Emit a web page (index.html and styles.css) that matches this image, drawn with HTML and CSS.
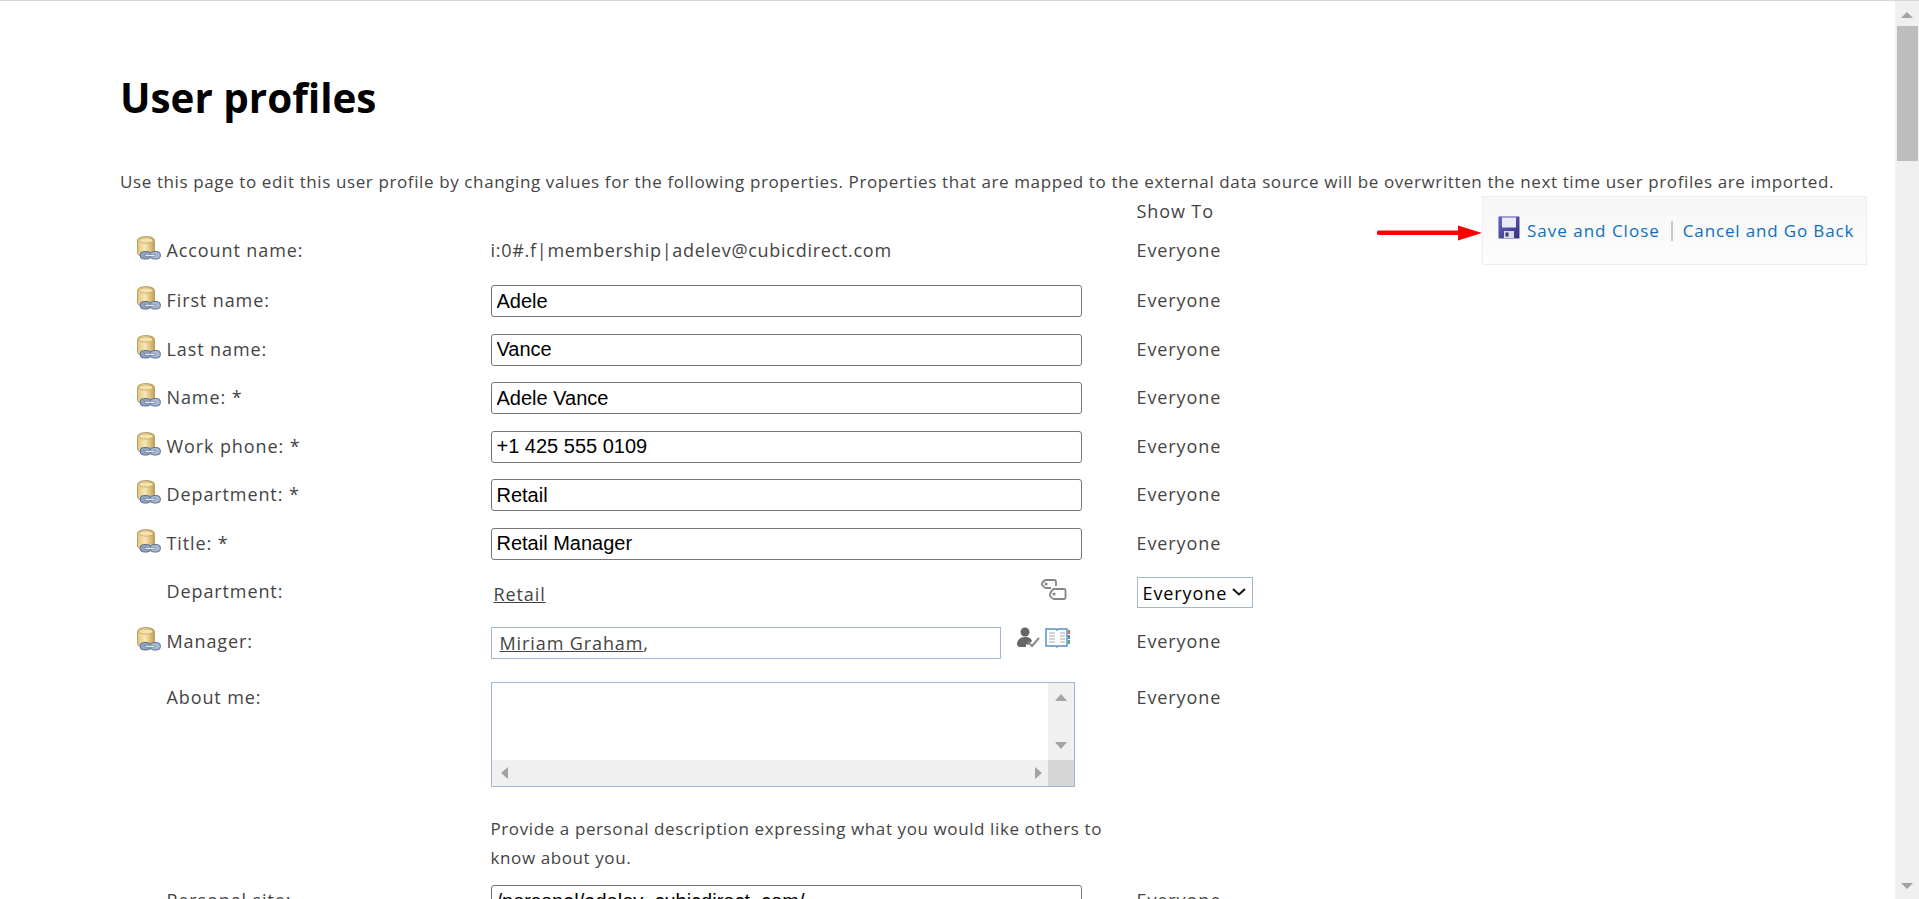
FILE: index.html
```html
<!DOCTYPE html>
<html lang="en">
<head>
<meta charset="utf-8">
<title>User profiles</title>
<link rel="stylesheet" href="styles.css">
</head>
<body>
<svg class="defs" width="0" height="0" aria-hidden="true">
  <defs>
    <linearGradient id="gold" x1="0" x2="1" y1="0" y2="0">
      <stop offset="0" stop-color="#e6c77c"/><stop offset=".45" stop-color="#f8e7b6"/><stop offset="1" stop-color="#c79f52"/>
    </linearGradient>
    <linearGradient id="disk" x1="0" x2="1" y1="0" y2="1">
      <stop offset="0" stop-color="#6a66c4"/><stop offset="1" stop-color="#35327f"/>
    </linearGradient>
    <symbol id="db" viewBox="0 0 24 24">
      <path d="M.6 4.500C.6 2.200 4 .6 9 .6s8.400 1.600 8.400 3.900V17c0 2-3.500 3.500-8.400 3.500S.6 19 .6 17z" fill="url(#gold)" stroke="#a8935f" stroke-width=".9"/>
      <ellipse cx="9" cy="4.500" rx="7" ry="2.600" fill="#f5e3ae" stroke="#c4a566" stroke-width=".8"/>
      <rect x="3" y="15.500" width="11" height="7.500" rx="3.700" fill="#8fa2bd" stroke="#5f7391"/>
      <rect x="13" y="15.500" width="10.500" height="7.500" rx="3.700" fill="#a8b8ce" stroke="#5f7391"/>
      <rect x="8" y="18.400" width="10" height="1.800" fill="#e8edf3" stroke="#5f7391" stroke-width=".5"/>
    </symbol>
  </defs>
</svg>
<div class="app">
  <main class="page">
    <h1 class="title">User profiles</h1>
    <p class="intro">Use this page to edit this user profile by changing values for the following properties. Properties that are mapped to the external data source will be overwritten the next time user profiles are imported.</p>
    <div class="form">
      <div class="row row-head"><span></span><span></span><span></span><span class="show">Show To</span></div>
      <div class="row row-account"><svg class="db"><use href="#db"/></svg><span class="label">Account name:</span><span class="value">i:0#.f|membership|adelev@cubicdirect.com</span><span class="show">Everyone</span></div>
      <div class="row"><svg class="db"><use href="#db"/></svg><span class="label">First name:</span><input class="field" value="Adele"><span class="show">Everyone</span></div>
      <div class="row"><svg class="db"><use href="#db"/></svg><span class="label">Last name:</span><input class="field" value="Vance"><span class="show">Everyone</span></div>
      <div class="row"><svg class="db"><use href="#db"/></svg><span class="label">Name: *</span><input class="field" value="Adele Vance"><span class="show">Everyone</span></div>
      <div class="row"><svg class="db"><use href="#db"/></svg><span class="label">Work phone: *</span><input class="field" value="+1 425 555 0109"><span class="show">Everyone</span></div>
      <div class="row"><svg class="db"><use href="#db"/></svg><span class="label">Department: *</span><input class="field" value="Retail"><span class="show">Everyone</span></div>
      <div class="row"><svg class="db"><use href="#db"/></svg><span class="label">Title: *</span><input class="field" value="Retail Manager"><span class="show">Everyone</span></div>
      <div class="row row-dept">
        <span></span><span class="label">Department:</span>
        <div class="value-line"><a class="person dept-link" href="#">Retail</a>
          <svg class="tag" width="26" height="22" viewBox="0 0 26 22" fill="none" stroke="#858585" stroke-width="1.800"><path d="M15 7V3q0-2-2-2H5Q3.500 1 1 4v2q2.500 3 4 3h5"/><path d="M13 10h10q1.500 0 1.500 1.500v7q0 1.500-1.500 1.500H13q-1.500 0-4-3v-2q2.500-5 4-5z"/><circle cx="5" cy="5" r=".7"/><circle cx="13" cy="15" r=".7"/></svg>
        </div>
        <div class="vis-wrap">
          <select class="vis"><option>Everyone</option></select>
          <svg class="chev" width="14" height="8" viewBox="0 0 14 8" fill="none" stroke="#111" stroke-width="2"><path d="M1 1l6 5.500L13 1"/></svg>
        </div>
      </div>
      <div class="row row-mgr">
        <svg class="db"><use href="#db"/></svg><span class="label">Manager:</span>
        <div class="value-line">
          <div class="picker"><a class="person" href="#">Miriam Graham</a><span>,</span></div>
          <svg class="check" width="24" height="22" viewBox="0 0 24 22"><circle cx="8" cy="5" r="4.500" fill="#666"/><path d="M0 18c0-5 3-8 8-8s6 2 7 4l-4 4-2-1v3H2z" fill="#666"/><path d="M11 15l4 4 7-8" fill="none" stroke="#8a8a8a" stroke-width="2"/></svg>
          <svg class="book" width="26" height="22" viewBox="0 0 26 22" fill="none"><path d="M1 2h10l1 1 1-1h9v17H13l-1 1-1-1H1z" stroke="#5b8fc9" stroke-width="1.500" fill="#fff"/><path d="M4 6h6M4 9h6M4 12h6M4 15h6M15 6h5M15 9h5M15 12h5M15 15h5" stroke="#aaa" stroke-width="1.200"/><path d="M23 3h2v4h-2z" fill="#d9694a"/><path d="M23 8h2v4h-2z" fill="#4a86c9"/><path d="M23 13h2v4h-2z" fill="#5aa56a"/></svg>
        </div>
        <span class="show">Everyone</span>
      </div>
      <div class="row row-about">
        <span></span><span class="label">About me:</span>
        <div class="about">
          <div class="rich">
            <div class="rich-main">
              <div class="rich-text"></div>
              <div class="vbar"><i class="tri tri-up"></i><i class="tri tri-down"></i></div>
            </div>
            <div class="hbar"><i class="tri tri-left"></i><i class="tri tri-right"></i><b class="corner"></b></div>
          </div>
          <p class="help">Provide a personal description expressing what you would like others to know about you.</p>
        </div>
        <span class="show">Everyone</span>
      </div>
      <div class="row row-site"><span></span><span class="label">Personal site:</span><input class="field" value="/personal/adelev_cubicdirect_com/"><span class="show">Everyone</span></div>
    </div>
    <div class="actions">
      <svg class="floppy" width="22" height="23" viewBox="0 0 22 23"><rect x=".5" y=".5" width="21" height="22" rx="1" fill="url(#disk)" stroke="#a09dd0"/><rect x="4" y="1.500" width="14" height="10" fill="#e9ecf6"/><rect x="6" y="15" width="10" height="7" fill="#d9dbe8"/><rect x="7.500" y="16.500" width="3" height="4" fill="#3a3770"/></svg>
      <a class="action" href="#">Save and Close</a>
      <span class="sep"></span>
      <a class="action action-back" href="#">Cancel and Go Back</a>
    </div>
    <svg class="arrow" width="106" height="16" viewBox="0 0 106 16"><path d="M2 7.800H82" stroke="#f00" stroke-width="4.500" stroke-linecap="round"/><path d="M81 .5l24 7.500-24 7.500z" fill="#f00"/></svg>
  </main>
  <aside class="scroll">
    <i class="tri-page"></i>
    <div class="thumb"></div>
    <i class="tri-page-down"></i>
  </aside>
</div>
</body>
</html>
```
FILE: styles.css
```css
* { box-sizing: border-box; }
html, body { margin: 0; height: 100%; overflow: hidden; background: #fff; }
body { font-family: "Open Sans", "Noto Sans", sans-serif; font-size: 18px; letter-spacing: .9px; color: #444; }
.defs { position: absolute; }
.app { display: flex; height: 899px; border-top: 1px solid #d6d6d6; }
.page { position: relative; flex: 1; overflow: hidden; padding: 0 0 0 120px; }
.title { margin: 68px 0 0; font-size: 40.400px; line-height: 58px; font-weight: 700; letter-spacing: 0; color: #000; }
.intro { margin: 43px 0 0; font-size: 17px; letter-spacing: .61px; line-height: 24px; white-space: nowrap; }
.row { display: grid; grid-template-columns: 29.500px 324px 646px 200px; height: 48.500px; align-items: start; padding-left: 17px; }
.row-head { height: 42px; }
.row-head .show { padding-top: 5px; }
.row-account { height: 50px; }
.db { width: 24px; height: 24px; }
.label, .value, .show { line-height: 24px; padding-top: 2px; }
.value { letter-spacing: .72px; }
.field { width: 591px; height: 32px; margin-top: -1px; padding: 0 5px; border: 1px solid #767676; border-radius: 3px; font-family: "Liberation Sans", sans-serif; font-size: 20px; letter-spacing: 0; color: #000; background: #fff; }
.value-line { display: flex; align-items: flex-start; }
.person { color: #444; text-decoration: underline; }
.dept-link { padding: 5px 0 0 3px; width: 550px; }
.tag { margin-top: 2px; }
.vis-wrap { position: relative; width: 116px; height: 31px; }
.vis { appearance: none; width: 116px; height: 31px; border: 1px solid #9fb8cf; background: #fff; color: #000; font: 18px "Open Sans", sans-serif; letter-spacing: .9px; padding: 0 0 0 5px; border-radius: 0; }
.chev { position: absolute; right: 7px; top: 11px; pointer-events: none; }
.row-dept { height: 50px; }
.row-mgr { height: 56px; }
.picker { width: 510px; height: 32px; border: 1px solid #9fb8cf; padding: 3px 8px; }
.check { margin: 0 0 0 16px; }
.book { margin: 0 0 0 4px; }
.row-about { height: auto; }
.about { width: 620px; }
.rich { width: 584px; height: 105px; margin-top: -1px; border: 1px solid #9fb8cf; display: flex; flex-direction: column; }
.rich-main { flex: 1; display: flex; }
.rich-text { flex: 1; }
.vbar { width: 26px; background: #f0f0f0; display: flex; flex-direction: column; justify-content: space-between; align-items: center; padding: 11px 0; }
.hbar { height: 26px; background: #f0f0f0; display: flex; align-items: center; justify-content: space-between; padding-left: 9px; }
.corner { width: 26px; height: 26px; background: #d6d6d6; margin-left: 6px; }
.hbar .tri-right { margin-left: auto; }
.tri { display: block; width: 0; height: 0; border-style: solid; border-color: transparent; }
.tri-up { border-width: 0 6px 7px; border-bottom-color: #a3a3a3; }
.tri-down { border-width: 7px 6px 0; border-top-color: #a3a3a3; }
.tri-left { border-width: 6px 7px 6px 0; border-right-color: #a3a3a3; }
.tri-right { border-width: 6px 0 6px 7px; border-left-color: #a3a3a3; }
.help { margin: 27px 0 0; font-size: 17px; letter-spacing: .6px; line-height: 29px; }
.row-site { margin-top: 14px; }
.actions { position: absolute; left: 1482px; top: 195px; width: 385px; height: 69px; display: flex; align-items: center; padding-left: 15px; border: 1px solid #eeeeee; background: linear-gradient(#f6f6f6, #fdfdfd); }
.floppy { margin: -6px 7px 0 0; flex: none; }
.action { color: #106ebe; text-decoration: none; font-size: 17px; letter-spacing: 1px; white-space: nowrap; }
.action-back { letter-spacing: .85px; }
.sep { width: 2px; height: 20px; margin: 0 10px 0 11px; background: #c4cad4; flex: none; }
.arrow { position: absolute; left: 1377px; top: 224px; }
.scroll { width: 24px; flex: none; background: #f0f0f0; display: flex; flex-direction: column; align-items: center; position: relative; }
.tri-page { width: 0; height: 0; margin-top: 11px; border: solid transparent; border-width: 0 6px 6px; border-bottom-color: #a3a3a3; }
.thumb { width: 21px; height: 135px; margin: 8px 0 0 1px; background: #bdbdbd; }
.tri-page-down { position: absolute; bottom: 10px; width: 0; height: 0; border: solid transparent; border-width: 6px 6px 0; border-top-color: #a3a3a3; }
```
